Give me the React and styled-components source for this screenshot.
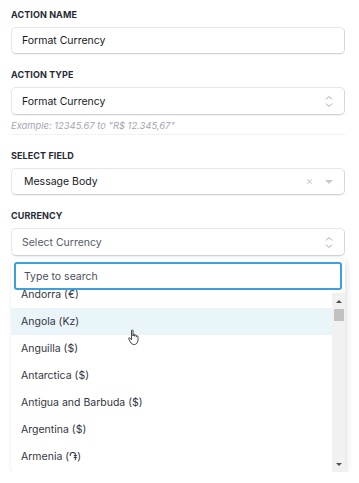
import React, { useEffect, useRef } from "react";
import styled, { createGlobalStyle } from "styled-components";

const COUNTRIES = [
  ["Afghanistan", "؋"], ["Albania", "Lek"], ["Algeria", "دج"], ["American Samoa", "$"],
  ["Andorra", "€"], ["Angola", "Kz"], ["Anguilla", "$"], ["Antarctica", "$"],
  ["Antigua and Barbuda", "$"], ["Argentina", "$"], ["Armenia", "֏"], ["Aruba", "ƒ"],
  ["Australia", "$"], ["Austria", "€"], ["Azerbaijan", "m"], ["Bahamas", "B$"],
  ["Bahrain", ".د.ب"], ["Bangladesh", "৳"], ["Barbados", "Bds$"], ["Belarus", "Br"],
  ["Belgium", "€"], ["Belize", "$"], ["Benin", "CFA"], ["Bermuda", "$"],
  ["Bhutan", "Nu."], ["Bolivia", "Bs."], ["Bosnia and Herzegovina", "KM"], ["Botswana", "P"],
  ["Bouvet Island", "kr"], ["Brazil", "R$"], ["Brunei", "B$"], ["Bulgaria", "Лв."],
  ["Burkina Faso", "CFA"], ["Burundi", "FBu"], ["Cambodia", "KHR"], ["Cameroon", "FCFA"],
  ["Canada", "$"], ["Cape Verde", "$"], ["Cayman Islands", "$"], ["Chad", "FCFA"],
  ["Chile", "$"], ["China", "¥"], ["Colombia", "$"], ["Comoros", "CF"],
  ["Congo", "FC"], ["Costa Rica", "₡"], ["Croatia", "kn"], ["Cuba", "$"],
  ["Cyprus", "€"], ["Czech Republic", "Kč"], ["Denmark", "Kr."], ["Djibouti", "fdj"],
  ["Dominica", "$"], ["Ecuador", "$"], ["Egypt", "ج.م"], ["El Salvador", "$"],
  ["Eritrea", "Nfk"], ["Estonia", "€"], ["Ethiopia", "Nkf"], ["Fiji", "FJ$"],
  ["Finland", "€"], ["France", "€"], ["Gabon", "FCFA"], ["Gambia", "D"],
  ["Georgia", "ლ"], ["Germany", "€"], ["Ghana", "GH₵"], ["Greece", "€"],
  ["Grenada", "$"], ["Guatemala", "Q"], ["Guinea", "FG"], ["Guyana", "$"],
  ["Haiti", "G"], ["Honduras", "L"], ["Hong Kong", "$"], ["Hungary", "Ft"],
  ["Iceland", "kr"], ["India", "₹"], ["Indonesia", "Rp"], ["Iran", "﷼"],
  ["Iraq", "د.ع"], ["Ireland", "€"], ["Israel", "₪"], ["Italy", "€"],
  ["Jamaica", "J$"], ["Japan", "¥"], ["Jordan", "ا.د"], ["Kazakhstan", "лв"],
];

const GlobalStyle = createGlobalStyle`
  body {
    margin: 0;
    background: #ffffff;
    font-family: Inter, "Noto Sans", sans-serif;
    color: #1f2330;
  }
`;

const Form = styled.div`
  width: 334px;
  padding: 9px 0 0 11px;
  position: relative;
`;

const Group = styled.div`
  margin-bottom: ${(p) => p.$gap ?? 15}px;
`;

const Label = styled.div`
  font-size: 9px;
  line-height: 12px;
  font-weight: 700;
  letter-spacing: 0.1px;
  text-transform: uppercase;
  color: #262a36;
  margin-bottom: 6px;
`;

const Field = styled.div`
  box-sizing: border-box;
  height: ${(p) => p.$h || 28}px;
  display: flex;
  align-items: center;
  gap: 10px;
  padding: 0 11px 0 ${(p) => p.$pl || 10}px;
  border: 1px solid #e6e7ec;
  border-bottom-color: #cfd0d8;
  border-right-color: #d6d7de;
  border-radius: 5px;
  box-shadow: 0 1px 1px rgba(30, 30, 60, 0.06);
  font-size: 10.5px;
  color: ${(p) => (p.$placeholder ? "#555a66" : "#161a26")};
`;

const FieldText = styled.span`
  flex: 1;
`;

const Helper = styled.div`
  margin-top: 5px;
  padding-bottom: 2px;
  border-bottom: 1px solid #f1f2f5;
  font-size: 9.4px;
  line-height: 12px;
  font-style: italic;
  color: #a3a6b1;
`;

const Clear = styled.span`
  font-size: 11px;
  color: #c9c9cf;
  line-height: 1;
  margin-right: 2px;
`;

const Caret = styled.span`
  width: 0;
  height: 0;
  border-left: 4px solid transparent;
  border-right: 4px solid transparent;
  border-top: 4px solid #c9c9cf;
`;

const Panel = styled.div`
  margin-top: 3px;
  background: #ffffff;
  border-radius: 4px;
  box-shadow: 2px 2px 6px rgba(0, 0, 0, 0.12);
  overflow: hidden;
`;

const SearchWrap = styled.div`
  padding: 3px 3px 0;
`;

const Search = styled.input`
  box-sizing: border-box;
  width: 100%;
  height: 28px;
  border: 2px solid #3ba0dc;
  border-radius: 3px;
  padding: 0 8px;
  font-family: Inter, "Noto Sans", sans-serif;
  font-size: 10.5px;
  outline: none;
  &::placeholder {
    color: #4a4f5c;
  }
`;

const ListRow = styled.div`
  display: flex;
  height: 182px;
`;

const List = styled.div`
  flex: 1;
  overflow-y: scroll;
  scrollbar-width: none;
  &::-webkit-scrollbar {
    display: none;
  }
`;

const Scrollbar = styled.div`
  width: 13px;
  margin-top: 3px;
  background: #f1f1f1;
  display: flex;
  flex-direction: column;
  align-items: center;
  padding: 7px 0 6px;
  box-sizing: border-box;
`;

const Arrow = styled.span`
  width: 0;
  height: 0;
  border-left: 3px solid transparent;
  border-right: 3px solid transparent;
  ${(p) => (p.$down ? "border-top: 3px solid #505050;" : "border-bottom: 3px solid #505050;")}
`;

const Thumb = styled.div`
  width: 10px;
  height: 12px;
  margin-top: 6px;
  background: #c1c1c1;
`;

const Track = styled.div`
  flex: 1;
`;

const Option = styled.div`
  height: 27px;
  display: flex;
  align-items: center;
  padding-left: 10px;
  font-size: 10.5px;
  color: #33363f;
  background: ${(p) => (p.$active ? "#eaf5fa" : "transparent")};
  white-space: nowrap;
`;

const Cursor = styled.svg`
  position: absolute;
  left: 127px;
  top: 329px;
`;

const UpDown = () => (
  <svg width="8" height="13" viewBox="0 0 8 13" fill="none" stroke="#a4a7b2" strokeWidth="1">
    <path d="M1 4.5 L4 1.5 L7 4.5" />
    <path d="M1 8.5 L4 11.5 L7 8.5" />
  </svg>
);

const App = () => {
  const listRef = useRef(null);

  useEffect(() => {
    if (listRef.current) listRef.current.scrollTop = 117;
  }, []);

  return (
    <>
      <GlobalStyle />
      <Form>
        <Group>
          <Label>Action Name</Label>
          <Field $h={27}>
            <FieldText>Format Currency</FieldText>
          </Field>
        </Group>

        <Group>
          <Label>Action Type</Label>
          <Field>
            <FieldText>Format Currency</FieldText>
            <UpDown />
          </Field>
          <Helper>Example: 12345.67 to "R$ 12.345,67"</Helper>
        </Group>

        <Group>
          <Label>Select Field</Label>
          <Field $h={27} $pl={12}>
            <FieldText>Message Body</FieldText>
            <Clear>×</Clear>
            <Caret />
          </Field>
        </Group>

        <Group $gap={0}>
          <Label>Currency</Label>
          <Field $placeholder>
            <FieldText>Select Currency</FieldText>
            <UpDown />
          </Field>
          <Panel>
            <SearchWrap>
              <Search placeholder="Type to search" />
            </SearchWrap>
            <ListRow>
              <List ref={listRef}>
                {COUNTRIES.map(([name, sym]) => (
                  <Option key={name} $active={name === "Angola"}>
                    {name} ({sym})
                  </Option>
                ))}
              </List>
              <Scrollbar>
                <Arrow />
                <Thumb />
                <Track />
                <Arrow $down />
              </Scrollbar>
            </ListRow>
          </Panel>
        </Group>

        <Cursor width="14" height="17" viewBox="0 0 14 17" fill="#fff" stroke="#333" strokeWidth="0.9">
          <path d="M4.5 1.5 C4.5 0.7 6 0.7 6 1.5 L6 7 L6.2 5.8 C6.3 5 7.7 5 7.7 5.9 L7.7 7.3 L7.9 6.4 C8.1 5.7 9.4 5.8 9.4 6.6 L9.4 7.8 L9.6 7.2 C9.9 6.6 11 6.8 11 7.5 L11 11 C11 13.5 9.6 15.5 7.3 15.5 C5.3 15.5 4.3 14.6 3.4 13 L1.6 9.8 C1.2 9 2.3 8.3 2.9 9 L4.5 10.8 Z" />
        </Cursor>
      </Form>
    </>
  );
};

export default App;
